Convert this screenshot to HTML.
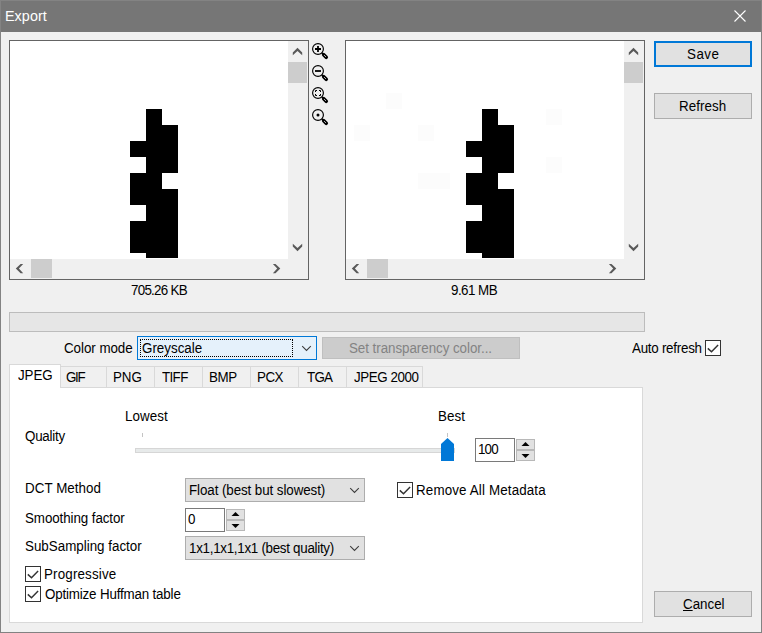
<!DOCTYPE html>
<html><head><meta charset="utf-8"><title>Export</title>
<style>
*{margin:0;padding:0;box-sizing:border-box}
html,body{width:762px;height:633px;overflow:hidden;background:#f0f0f0}
body{position:relative;font-family:"Liberation Sans",sans-serif;font-size:14px;color:#000}
.a{position:absolute}
.t{position:absolute;white-space:nowrap;line-height:16px;height:16px}
.box{position:absolute;border:1px solid #646464;background:#fff}
.btn{position:absolute;background:#e1e1e1;border:1px solid #adadad;text-align:center}
.sp{border-color:#b8b8b8}
.cb{position:absolute;width:16px;height:16px;border:1px solid #333;background:#fff}
.tab{position:absolute;top:366px;height:22px;border:1px solid #d9d9d9;border-left:none;background:#f0f0f0}
svg{position:absolute;overflow:visible;z-index:5;pointer-events:none}
.t{z-index:6;transform:scaleX(.955);transform-origin:0 0}
</style></head><body>
<!-- window frame -->
<div class="a" style="left:0;top:0;width:762px;height:32px;background:#767676"></div>
<div class="a" style="left:0;top:0;width:762px;height:1px;background:#838383"></div>
<div class="a" style="left:0;top:0;width:1px;height:633px;background:#838383"></div>
<div class="a" style="left:761px;top:0;width:1px;height:633px;background:#838383"></div>
<div class="a" style="left:0;top:632px;width:762px;height:1px;background:#828282"></div>
<div class="t" id="title" style="left:4.55px;top:8px;letter-spacing:0.07px;font-size:15px;color:#fff">Export</div>
<svg style="left:734px;top:10px" width="12" height="12"><path d="M0.5 0.5 L11.5 11.5 M11.5 0.5 L0.5 11.5" stroke="#fff" stroke-width="1.1" fill="none"/></svg>

<!-- left preview -->
<div class="box" style="left:9px;top:40px;width:300px;height:240px"></div>
<div class="a" style="left:288px;top:41px;width:20px;height:238px;background:#f0f0f0"></div>
<div class="a" style="left:10px;top:259px;width:298px;height:20px;background:#f0f0f0"></div>
<div class="a" style="left:288px;top:62px;width:19px;height:21px;background:#cdcdcd"></div>
<div class="a" style="left:31px;top:259px;width:21px;height:19px;background:#cdcdcd"></div>
<svg style="left:0;top:0" width="762" height="633" fill="#595959" stroke="none">
 <path d="M292.8 52.6 L297.5 47.8 L302.2 52.6 L302.2 55.2 L297.5 50.9 L292.8 55.2 Z"/>
 <path d="M292.8 246.4 L297.5 251.2 L302.2 246.4 L302.2 243.8 L297.5 248.1 L292.8 243.8 Z"/>
 <path d="M15.8 268.6 L20.6 263.9 L23.2 263.9 L18.9 268.6 L23.2 273.3 L20.6 273.3 Z"/>
 <path d="M280.3 268.6 L275.5 263.9 L272.9 263.9 L277.2 268.6 L272.9 273.3 L275.5 273.3 Z"/>
 <path d="M628.8 52.6 L633.5 47.8 L638.2 52.6 L638.2 55.2 L633.5 50.9 L628.8 55.2 Z"/>
 <path d="M628.8 246.4 L633.5 251.2 L638.2 246.4 L638.2 243.8 L633.5 248.1 L628.8 243.8 Z"/>
 <path d="M351.8 268.6 L356.6 263.9 L359.2 263.9 L354.9 268.6 L359.2 273.3 L356.6 273.3 Z"/>
 <path d="M616.3 268.6 L611.5 263.9 L608.9 263.9 L613.2 268.6 L608.9 273.3 L611.5 273.3 Z"/>
</svg>
<!-- shape left -->
<div class="a" style="left:146px;top:109px;width:16px;height:149px;background:#000"></div>
<div class="a" style="left:162px;top:125px;width:16px;height:48px;background:#000"></div>
<div class="a" style="left:162px;top:189px;width:16px;height:69px;background:#000"></div>
<div class="a" style="left:130px;top:141px;width:16px;height:16px;background:#000"></div>
<div class="a" style="left:130px;top:173px;width:16px;height:32px;background:#000"></div>
<div class="a" style="left:130px;top:221px;width:16px;height:32px;background:#000"></div>

<!-- right preview -->
<div class="box" style="left:345px;top:40px;width:300px;height:240px"></div>
<div class="a" style="left:624px;top:41px;width:20px;height:238px;background:#f0f0f0"></div>
<div class="a" style="left:346px;top:259px;width:298px;height:20px;background:#f0f0f0"></div>
<div class="a" style="left:624px;top:62px;width:19px;height:21px;background:#cdcdcd"></div>
<div class="a" style="left:367px;top:259px;width:21px;height:19px;background:#cdcdcd"></div>
<div class="a" style="left:386px;top:93px;width:16px;height:16px;background:#fcfcfc"></div>
<div class="a" style="left:354px;top:125px;width:16px;height:16px;background:#fcfcfc"></div>
<div class="a" style="left:418px;top:125px;width:16px;height:16px;background:#fcfcfc"></div>
<div class="a" style="left:418px;top:173px;width:32px;height:16px;background:#fcfcfc"></div>
<div class="a" style="left:546px;top:109px;width:16px;height:16px;background:#fcfcfc"></div>
<div class="a" style="left:546px;top:157px;width:16px;height:16px;background:#fcfcfc"></div>
<div class="a" style="left:482px;top:109px;width:16px;height:149px;background:#000"></div>
<div class="a" style="left:498px;top:125px;width:16px;height:48px;background:#000"></div>
<div class="a" style="left:498px;top:189px;width:16px;height:69px;background:#000"></div>
<div class="a" style="left:466px;top:141px;width:16px;height:16px;background:#000"></div>
<div class="a" style="left:466px;top:173px;width:16px;height:32px;background:#000"></div>
<div class="a" style="left:466px;top:221px;width:16px;height:32px;background:#000"></div>

<!-- zoom icons -->
<svg style="left:0;top:0" width="762" height="633" fill="none" stroke="#000">
 <g>
  <circle cx="318" cy="49" r="5.4" stroke-width="1.15"/>
  <path d="M321.8 52.8 L324 55" stroke-width="1.6"/><path d="M323.7 54.7 L326.2 57.2" stroke-width="3.7" stroke-linecap="round"/>
  <path d="M324 55 L326 57" stroke="#e8e8e8" stroke-width="0.75"/>
  <path d="M315 49 H321 M318 46 V52" stroke-width="1.8"/>
 </g>
 <g>
  <circle cx="318" cy="71" r="5.4" stroke-width="1.15"/>
  <path d="M321.8 74.8 L324 77" stroke-width="1.6"/><path d="M323.7 76.7 L326.2 79.2" stroke-width="3.7" stroke-linecap="round"/>
  <path d="M324 77 L326 79" stroke="#e8e8e8" stroke-width="0.75"/>
  <path d="M315 71 H321" stroke-width="1.8"/>
 </g>
 <g>
  <circle cx="318" cy="93" r="5.4" stroke-width="1.15"/>
  <path d="M321.8 96.8 L324 99" stroke-width="1.6"/><path d="M323.7 98.7 L326.2 101.2" stroke-width="3.7" stroke-linecap="round"/>
  <path d="M324 99 L326 101" stroke="#e8e8e8" stroke-width="0.75"/>
  <path d="M315.5 92 V90.5 H317 M319 90.5 H320.5 V92 M320.5 94 V95.5 H319 M317 95.5 H315.5 V94" stroke-width="1"/>
 </g>
 <g>
  <circle cx="318" cy="115" r="5.4" stroke-width="1.15"/>
  <path d="M321.8 118.8 L324 121" stroke-width="1.6"/><path d="M323.7 120.7 L326.2 123.2" stroke-width="3.7" stroke-linecap="round"/>
  <path d="M324 121 L326 123" stroke="#e8e8e8" stroke-width="0.75"/>
  <circle cx="318" cy="115" r="1.5" fill="#000" stroke="none"/>
 </g>
</svg>

<!-- size labels -->
<div class="t" id="sz1" style="left:130.7px;top:282px;letter-spacing:-0.77px">705.26 KB</div>
<div class="t" id="sz2" style="left:450.7px;top:282px;letter-spacing:-0.55px">9.61 MB</div>

<!-- buttons -->
<div class="btn" style="left:654px;top:41px;width:98px;height:26px;border:2px solid #0078d7"></div>
<div class="t" id="save" style="left:686.65px;top:46px;letter-spacing:0.51px">Save</div>
<div class="btn" style="left:654px;top:93px;width:98px;height:26px"></div>
<div class="t" id="refresh" style="left:678.65px;top:98px;letter-spacing:0.06px">Refresh</div>
<div class="btn" style="left:654px;top:591px;width:98px;height:26px"></div>
<div class="t" id="cancel" style="left:682.7px;top:596px;letter-spacing:-0.01px"><span style="text-decoration:underline">C</span>ancel</div>

<!-- progress -->
<div class="a" style="left:9px;top:312px;width:636px;height:20px;background:#e6e6e6;border:1px solid #bcbcbc"></div>

<!-- color mode row -->
<div class="t" id="cm" style="left:63.6px;top:340px;letter-spacing:-0.05px">Color mode</div>
<div class="a" style="left:137px;top:336px;width:180px;height:24px;background:#e5f1fb;border:1px solid #0078d7"></div>
<div class="a" style="left:140px;top:339px;width:153px;height:18px;border:1px dotted #000"></div>
<div class="t" id="grey" style="left:141.55px;top:340px">Greyscale</div>
<svg style="left:0;top:0" width="762" height="633" fill="none" stroke="#3c3c3c" stroke-width="1.05">
 <path d="M302.2 346.1 L306.5 350.4 L310.8 346.1"/>
 <path d="M350.2 488.1 L354.5 492.4 L358.8 488.1"/>
 <path d="M350.2 546.1 L354.5 550.4 L358.8 546.1"/>
</svg>
<div class="a" style="left:322px;top:337px;width:198px;height:22px;background:#cccccc;border:1px solid #bfbfbf"></div>
<div class="t" id="settr" style="left:348.7px;top:340px;letter-spacing:-0.05px;color:#838383">Set transparency color...</div>
<div class="t" id="auto" style="left:631.7px;top:340px;letter-spacing:-0.27px">Auto refresh</div>
<div class="cb" style="left:705px;top:340px"></div>

<!-- tab panel -->
<div class="a" style="left:9px;top:387px;width:634px;height:236px;background:#fff;border:1px solid #d9d9d9"></div>
<div class="a" style="left:9px;top:364px;width:52px;height:23px;background:#fff;border:1px solid #d9d9d9;border-bottom:none"></div>
<div class="a" style="left:10px;top:387px;width:50px;height:1px;background:#fff"></div>
<div class="tab" style="left:61px;width:46px"></div>
<div class="tab" style="left:107px;width:48px"></div>
<div class="tab" style="left:155px;width:48px"></div>
<div class="tab" style="left:203px;width:48px"></div>
<div class="tab" style="left:251px;width:48px"></div>
<div class="tab" style="left:299px;width:48px"></div>
<div class="tab" style="left:347px;width:76px"></div>
<div class="t" id="tb0" style="left:17.55px;top:367px;letter-spacing:-0.11px">JPEG</div>
<div class="t" id="tb1" style="left:65.7px;top:369px;letter-spacing:-1.35px">GIF</div>
<div class="t" id="tb2" style="left:112.6px;top:369px;letter-spacing:-0.05px">PNG</div>
<div class="t" id="tb3" style="left:161.7px;top:369px;letter-spacing:-0.66px">TIFF</div>
<div class="t" id="tb4" style="left:208.7px;top:369px;letter-spacing:-0.47px">BMP</div>
<div class="t" id="tb5" style="left:256.7px;top:369px;letter-spacing:-0.53px">PCX</div>
<div class="t" id="tb6" style="left:306.7px;top:369px;letter-spacing:-0.77px">TGA</div>
<div class="t" id="tb7" style="left:353.55px;top:369px;letter-spacing:-0.45px">JPEG 2000</div>

<!-- quality -->
<div class="t" id="low" style="left:124.7px;top:408px;letter-spacing:0.08px">Lowest</div>
<div class="t" id="best" style="left:437.6px;top:408px;letter-spacing:0.06px">Best</div>
<div class="t" id="qual" style="left:24.7px;top:428px;letter-spacing:-0.27px">Quality</div>
<div class="a" style="left:142px;top:433px;width:1px;height:4px;background:#c4c4c4"></div>
<div class="a" style="left:447px;top:433px;width:1px;height:4px;background:#c4c4c4"></div>
<div class="a" style="left:135px;top:448px;width:320px;height:5px;background:#e7eaea;border:1px solid #d6d6d6"></div>
<svg style="left:441px;top:438px" width="13" height="23"><path d="M0 6 L6.5 0 L13 6 V23 H0 Z" fill="#0078d7"/></svg>
<div class="a" style="left:475px;top:438px;width:40px;height:24px;background:#fff;border:1px solid #7a7a7a"></div>
<div class="t" id="v100" style="left:477.7px;top:441px;letter-spacing:-0.91px">100</div>
<div class="btn sp" style="left:516px;top:439px;width:19px;height:11px"></div>
<div class="btn sp" style="left:516px;top:450px;width:19px;height:11px"></div>
<svg style="left:0;top:0" width="762" height="633" fill="#000">
 <path d="M521.5 446 L525.5 442 L529.5 446 Z"/>
 <path d="M521.5 454 L525.5 458 L529.5 454 Z"/>
 <path d="M231.5 516 L235.5 512 L239.5 516 Z"/>
 <path d="M231.5 524 L235.5 528 L239.5 524 Z"/>
</svg>

<!-- options -->
<div class="t" id="dct" style="left:24.7px;top:480px;letter-spacing:0.05px">DCT Method</div>
<div class="btn" style="left:185px;top:478px;width:180px;height:24px"></div>
<div class="t" id="float" style="left:188.7px;top:482px;letter-spacing:-0.09px">Float (best but slowest)</div>
<div class="cb" style="left:397px;top:482px"></div>
<div class="t" id="rem" style="left:415.7px;top:482px;letter-spacing:0.15px">Remove All Metadata</div>

<div class="t" id="smooth" style="left:24.7px;top:510px;letter-spacing:-0.09px">Smoothing factor</div>
<div class="a" style="left:185px;top:508px;width:40px;height:24px;background:#fff;border:1px solid #7a7a7a"></div>
<div class="t" id="v0" style="left:188.3px;top:511px;letter-spacing:-0.06px">0</div>
<div class="btn sp" style="left:226px;top:509px;width:19px;height:11px"></div>
<div class="btn sp" style="left:226px;top:520px;width:19px;height:11px"></div>

<div class="t" id="sub" style="left:24.7px;top:538px">SubSampling factor</div>
<div class="btn" style="left:185px;top:536px;width:180px;height:24px"></div>
<div class="t" id="s1x1" style="left:188.7px;top:540px;letter-spacing:-0.3px">1x1,1x1,1x1 (best quality)</div>

<div class="cb" style="left:25px;top:566px"></div>
<div class="t" id="prog" style="left:43.7px;top:566px;letter-spacing:0.17px">Progressive</div>
<div class="cb" style="left:25px;top:586px"></div>
<div class="t" id="opt" style="left:44.7px;top:586px;letter-spacing:-0.18px">Optimize Huffman table</div>

<!-- check marks -->
<svg style="left:0;top:0" width="762" height="633" fill="none" stroke="#333" stroke-width="1.45">
 <path d="M707.8 348.4 L711.5 351.8 L718.1 344.9"/>
 <path d="M399.8 490.4 L403.5 493.8 L410.1 486.9"/>
 <path d="M27.8 574.4 L31.5 577.8 L38.1 570.9"/>
 <path d="M27.8 594.4 L31.5 597.8 L38.1 590.9"/>
</svg>
</body></html>
